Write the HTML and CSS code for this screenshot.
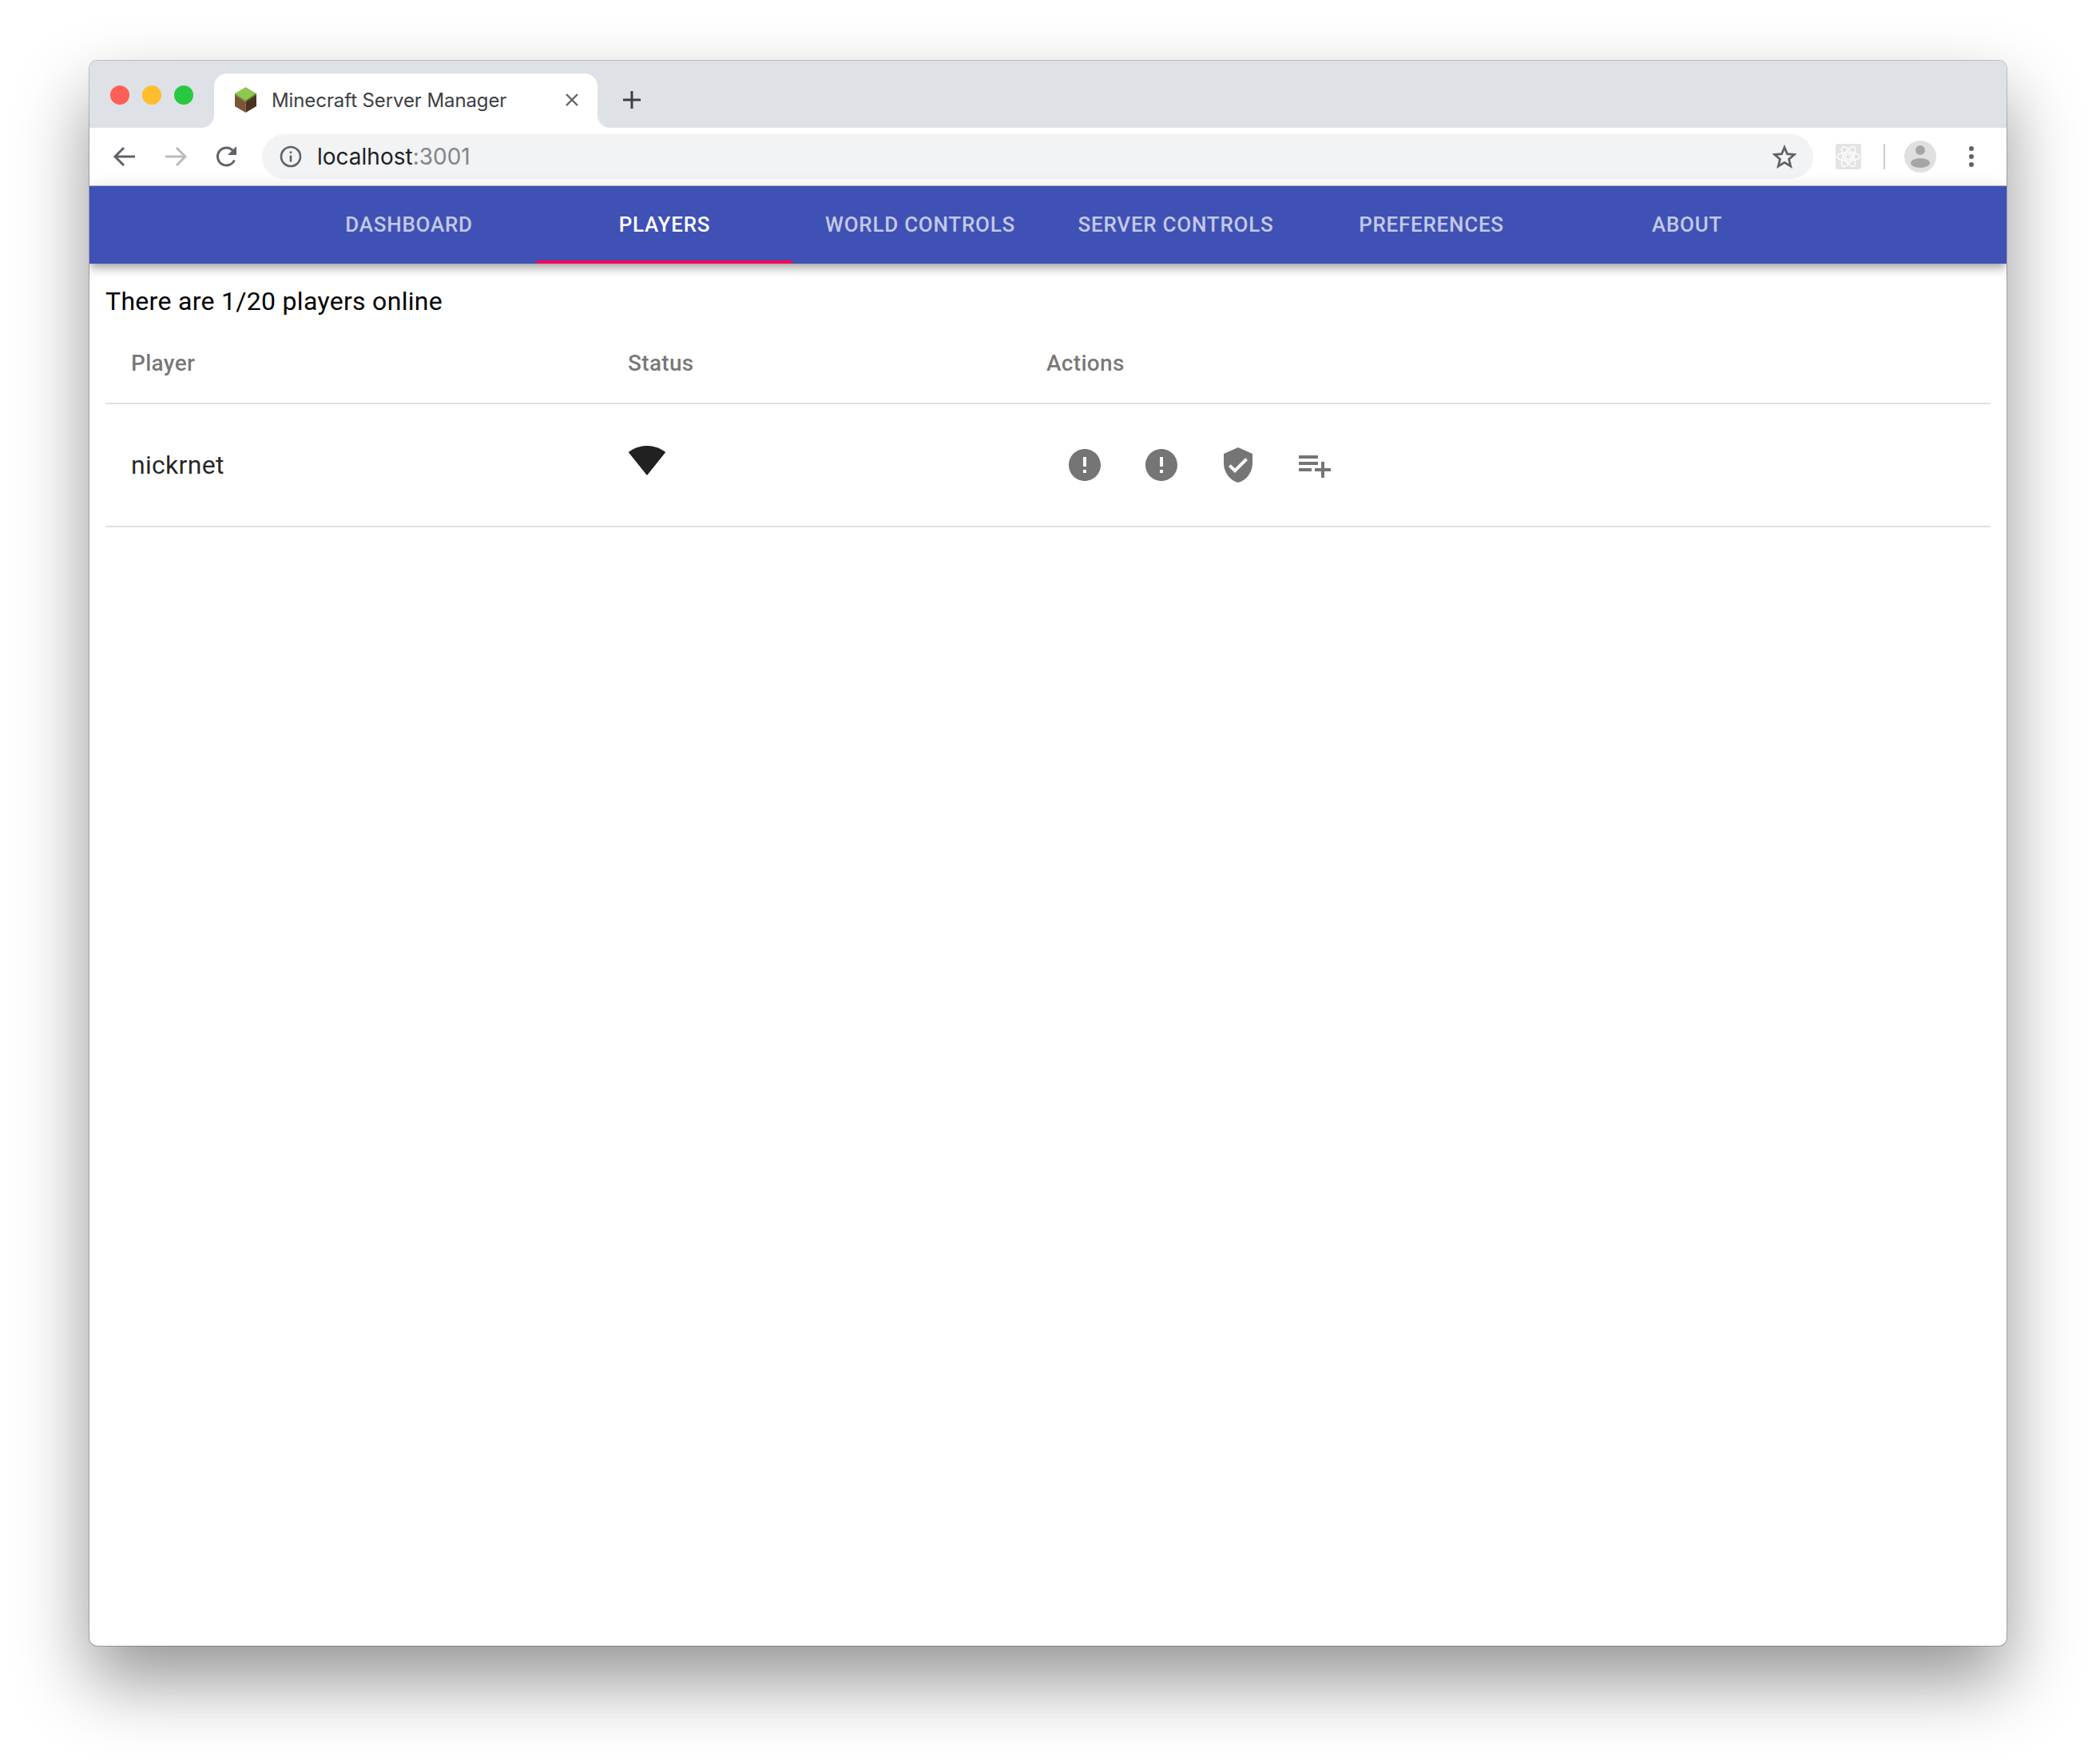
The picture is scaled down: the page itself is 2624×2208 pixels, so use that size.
FILE: index.html
```html
<!DOCTYPE html>
<html lang="en">
<head>
  <meta charset="UTF-8" />
  <title>Minecraft Server Manager</title>
  <link rel="stylesheet" href="styles.css">
</head>
<body>

  <div class="window">

    <div class="titlebar">
      <div class="lights">
        <span class="light red"></span>
        <span class="light yellow"></span>
        <span class="light green"></span>
      </div>
      <div class="tab">
        <svg class="favicon" viewBox="0 0 29 32">
          <polygon points="14.5,0 28,8 14.5,17 1,8" fill="#8fc74f"/>
          <polygon points="1,8 14.5,17 14.5,32 1,24" fill="#7d5536"/>
          <polygon points="28,8 14.5,17 14.5,32 28,24" fill="#4a3220"/>
          <polygon points="1,8 14.5,17 14.5,19 1,10" fill="#6f9c42"/>
          <polygon points="28,8 14.5,17 14.5,19 28,10" fill="#56772f"/>
        </svg>
        <span class="tab-title">Minecraft Server Manager</span>
        <svg class="tab-close" viewBox="0 0 18 18"><path d="M2 2l14 14M16 2L2 16" stroke="#5f6368" stroke-width="2.4" fill="none"/></svg>
      </div>
      <svg class="new-tab" viewBox="0 0 24 24"><path d="M12 1v22M1 12h22" stroke="#3c4043" stroke-width="3" fill="none"/></svg>
    </div>

    <div class="toolbar">
      <svg class="tool" viewBox="0 0 32 32"><path d="M29 16H5M15 5L4 16l11 11" stroke="#5f6368" stroke-width="3" fill="none"/></svg>
      <svg class="tool" viewBox="0 0 32 32"><path d="M3 16h24M17 5l11 11-11 11" stroke="#b9bbbe" stroke-width="3" fill="none"/></svg>
      <svg class="tool" viewBox="0 0 32 32"><path d="M25.5 20.5A11 11 0 1 1 24 9" stroke="#5f6368" stroke-width="3" fill="none"/><path d="M28 3v11H17z" fill="#5f6368"/></svg>
      <div class="omnibox">
        <svg class="info" viewBox="0 0 28 28">
          <circle cx="14" cy="14" r="12" stroke="#5f6368" stroke-width="2.6" fill="none"/>
          <path d="M14 12.5v8M14 7.5v2.6" stroke="#5f6368" stroke-width="2.6" fill="none"/>
        </svg>
        <span class="url">localhost<span class="port">:3001</span></span>
        <svg class="star" viewBox="0 0 30 30"><path d="M15 3.5l3.5 8.2 8.9.8-6.8 5.8 2.1 8.7-7.7-4.6-7.7 4.6 2.1-8.7-6.8-5.8 8.9-.8z" stroke="#5f6368" stroke-width="2.8" fill="none"/></svg>
      </div>
      <div class="ext">
        <svg viewBox="0 0 32 32">
          <circle cx="16" cy="16" r="3.4" fill="none" stroke="#fff" stroke-width="1.4"/>
          <ellipse cx="16" cy="16" rx="14" ry="5.6" fill="none" stroke="#fff" stroke-width="1.4"/>
          <ellipse cx="16" cy="16" rx="14" ry="5.6" fill="none" stroke="#fff" stroke-width="1.4" transform="rotate(60 16 16)"/>
          <ellipse cx="16" cy="16" rx="14" ry="5.6" fill="none" stroke="#fff" stroke-width="1.4" transform="rotate(120 16 16)"/>
        </svg>
      </div>
      <span class="tool-sep"></span>
      <svg class="avatar" viewBox="0 0 40 40">
        <circle cx="20" cy="20" r="20" fill="#e0e0e0"/>
        <circle cx="20" cy="12" r="6" fill="#a5a5a5"/>
        <ellipse cx="20" cy="28" rx="12" ry="6" fill="#a5a5a5"/>
      </svg>
      <svg class="dots" viewBox="0 0 6 26">
        <circle cx="3" cy="3" r="3" fill="#5f6368"/>
        <circle cx="3" cy="13" r="3" fill="#5f6368"/>
        <circle cx="3" cy="23" r="3" fill="#5f6368"/>
      </svg>
    </div>

    <nav class="nav">
      <a class="nav-tab">Dashboard</a>
      <a class="nav-tab active">Players</a>
      <a class="nav-tab">World Controls</a>
      <a class="nav-tab">Server Controls</a>
      <a class="nav-tab">Preferences</a>
      <a class="nav-tab">About</a>
    </nav>

    <main class="content">
      <p class="online">There are 1/20 players online</p>
      <table class="players">
        <thead>
          <tr>
            <th class="col-player">Player</th>
            <th class="col-status">Status</th>
            <th class="col-actions">Actions</th>
          </tr>
        </thead>
        <tbody>
          <tr>
            <td>nickrnet</td>
            <td>
              <svg class="wifi" viewBox="0 0 24 24"><path d="M12.01 21.49L23.64 7c-.45-.34-4.93-4-11.64-4C5.28 3 .81 6.66.36 7l11.63 14.49z"/></svg>
            </td>
            <td>
              <div class="actions">
                <button class="icon-btn"><svg viewBox="0 0 24 24"><path d="M12 2C6.48 2 2 6.48 2 12s4.48 10 10 10 10-4.48 10-10S17.52 2 12 2zm1 15h-2v-2h2v2zm0-4h-2V7h2v6z"/></svg></button>
                <button class="icon-btn"><svg viewBox="0 0 24 24"><path d="M12 2C6.48 2 2 6.48 2 12s4.48 10 10 10 10-4.48 10-10S17.52 2 12 2zm1 15h-2v-2h2v2zm0-4h-2V7h2v6z"/></svg></button>
                <button class="icon-btn"><svg viewBox="0 0 24 24"><path d="M12 1L3 5v6c0 5.55 3.84 10.74 9 12 5.16-1.26 9-6.45 9-12V5l-9-4zm-2 16l-4-4 1.41-1.41L10 14.17l6.59-6.59L18 9l-8 8z"/></svg></button>
                <button class="icon-btn"><svg viewBox="0 0 24 24"><path d="M14 10H2v2h12v-2zm0-4H2v2h12V6zm4 8v-4h-2v4h-4v2h4v4h2v-4h4v-2h-4zM2 16h8v-2H2v2z"/></svg></button>
              </div>
            </td>
          </tr>
        </tbody>
      </table>
    </main>

  </div>

</body>
</html>
```

FILE: styles.css
```css
* {
  box-sizing: border-box;
}
html, body {
  margin: 0;
  height: 2208px;
  overflow: hidden;
}
body {
  background: #fff;
  padding: 76px 112px 148px;
  font-family: Roboto, "Liberation Sans", sans-serif;
}

.window {
  height: 1984px;
  background: #fff;
  border-radius: 10px;
  overflow: hidden;
  box-shadow: 0 0 0 1px rgba(0,0,0,0.22), 0 44px 90px rgba(0,0,0,0.42);
  display: flex;
  flex-direction: column;
}

/* browser chrome */
.titlebar {
  height: 84px;
  flex: none;
  background: #dee1e6;
  display: flex;
  align-items: flex-end;
}
.lights {
  display: flex;
  gap: 16px;
  margin-left: 26px;
  align-self: flex-start;
  margin-top: 31px;
}
.light {
  width: 24px;
  height: 24px;
  border-radius: 50%;
}
.red { background: #ff5f57; }
.yellow { background: #ffbd2e; }
.green { background: #28c940; }

.tab {
  position: relative;
  width: 480px;
  height: 68px;
  margin-left: 26px;
  background: #fff;
  border-radius: 16px 16px 0 0;
  display: flex;
  align-items: center;
  padding: 0 0 2px 25px;
}
.tab::before,
.tab::after {
  content: "";
  position: absolute;
  bottom: 0;
  width: 16px;
  height: 16px;
}
.tab::before {
  left: -16px;
  background: radial-gradient(circle at 0 0, transparent 15.5px, #fff 16.5px);
}
.tab::after {
  right: -16px;
  background: radial-gradient(circle at 100% 0, transparent 15.5px, #fff 16.5px);
}
.favicon {
  width: 29px;
  height: 32px;
  flex: none;
}
.tab-title {
  margin-left: 18px;
  width: 367px;
  font-family: Inter, Roboto, sans-serif;
  font-size: 24px;
  letter-spacing: -0.1px;
  color: #3c4043;
  white-space: nowrap;
}
.tab-close {
  width: 18px;
  height: 18px;
  flex: none;
}
.new-tab {
  width: 24px;
  height: 24px;
  margin: 0 0 23px 31px;
}

.toolbar {
  height: 73px;
  flex: none;
  background: #fff;
  border-bottom: 1px solid #c4c4c4;
  display: flex;
  align-items: center;
  padding-left: 28px;
}
.tool {
  width: 32px;
  height: 32px;
  flex: none;
  margin-right: 32px;
}
.omnibox {
  width: 1942px;
  height: 56px;
  margin-left: -4px;
  border-radius: 28px;
  background: #f1f3f4;
  display: flex;
  align-items: center;
  padding: 0 21px 0 22px;
}
.info {
  width: 28px;
  height: 28px;
  flex: none;
}
.url {
  margin-left: 19px;
  flex: 1;
  font-family: Inter, Roboto, sans-serif;
  font-size: 28px;
  color: #202124;
}
.port {
  color: #80868b;
}
.star {
  width: 30px;
  height: 30px;
  flex: none;
}
.ext {
  width: 32px;
  height: 32px;
  margin-left: 28px;
  background: #e4e4e4;
  border-radius: 3px;
  flex: none;
}
.ext svg {
  display: block;
}
.tool-sep {
  width: 2px;
  height: 32px;
  margin-left: 28px;
  background: #ccc;
  flex: none;
}
.avatar {
  width: 40px;
  height: 40px;
  margin-left: 24px;
  flex: none;
}
.dots {
  width: 6px;
  height: 26px;
  margin-left: 41px;
  flex: none;
}

/* app bar */
.nav {
  height: 97px;
  flex: none;
  background: #3f51b5;
  display: flex;
  justify-content: center;
  position: relative;
  box-shadow: 0 4px 8px -2px rgba(0,0,0,0.2), 0 8px 10px 0 rgba(0,0,0,0.14), 0 2px 20px 0 rgba(0,0,0,0.12);
}
.nav-tab {
  width: 320px;
  display: flex;
  align-items: center;
  justify-content: center;
  padding-bottom: 1px;
  font-size: 26px;
  font-weight: 500;
  letter-spacing: 0.74px;
  text-transform: uppercase;
  color: rgba(255,255,255,0.7);
}
.nav-tab.active {
  color: #fff;
  border-bottom: 4px solid #f50057;
  padding-top: 3px;
  padding-bottom: 0;
}

/* players page */
.content {
  flex: 1;
  padding: 23px 20px 0;
}
.online {
  margin: 0;
  font-size: 32px;
  line-height: 48px;
  letter-spacing: 0.3px;
  color: #000;
}
.players {
  width: 100%;
  table-layout: fixed;
  border-collapse: collapse;
}
.col-player { width: 622px; }
.col-status { width: 524px; }
.players th,
.players td {
  padding: 0 0 0 32px;
  text-align: left;
  border-bottom: 2px solid #e0e0e0;
}
.players th {
  height: 104px;
  padding-top: 3px;
  font-size: 28px;
  font-weight: 500;
  letter-spacing: 0.3px;
  color: rgba(0,0,0,0.54);
}
.players td {
  height: 154px;
  font-size: 32px;
  letter-spacing: 0.3px;
  color: rgba(0,0,0,0.87);
}
.wifi {
  display: block;
  width: 48px;
  height: 48px;
  margin-top: -12px;
  fill: #212121;
}
.actions {
  display: flex;
}
.icon-btn {
  width: 96px;
  height: 96px;
  padding: 24px;
  border: none;
  background: none;
}
.icon-btn svg {
  display: block;
  width: 48px;
  height: 48px;
  fill: #757575;
}
```
